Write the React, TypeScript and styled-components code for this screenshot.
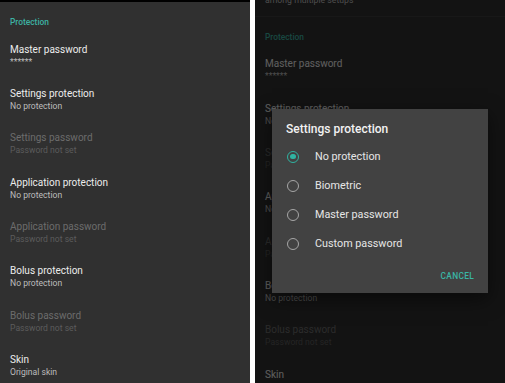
import React from "react";
import styled, { createGlobalStyle } from "styled-components";

const GlobalStyle = createGlobalStyle`
  html, body { margin: 0; padding: 0; background: #ffffff; }
  body { font-family: Roboto, "Noto Sans", "Liberation Sans", sans-serif; }
  * { box-sizing: border-box; }
`;

const Page = styled.div`
  display: flex;
  gap: 5px;
  width: 505px;
  height: 383px;
  background: #ffffff;
`;

const Screen = styled.div<{ $top?: number }>`
  position: relative;
  width: 250px;
  height: 383px;
  overflow: hidden;
  background: #303030;
  border-top: ${(p) => p.$top ?? 0}px solid #000;
  display: flex;
  flex-direction: column;
`;

const PrevTail = styled.div`
  flex: none;
  height: 16.8px;
  border-bottom: 1px solid #3c3c3c;
  padding: 0 10px;
  overflow: visible;
`;

const PrevText = styled.div`
  margin-top: -6px;
  font-size: 8.7px;
  line-height: 12px;
  color: #bdbdbd;
`;

const Category = styled.div`
  flex: none;
  height: 31px;
  display: flex;
  align-items: flex-end;
  padding: 0 10px 6px;
  font-size: 8.4px;
  line-height: 10px;
  font-weight: 500;
  color: #3db3a3;
`;

const Row = styled.div`
  flex: none;
  height: 44.33px;
  display: flex;
  flex-direction: column;
  justify-content: center;
  padding: 0 10px;
`;

const Title = styled.div<{ $disabled?: boolean }>`
  font-size: 10px;
  line-height: 13px;
  color: ${(p) => (p.$disabled ? "#6c6c6c" : "#ececec")};
  white-space: nowrap;
`;

const Summary = styled.div<{ $disabled?: boolean }>`
  font-size: 8.6px;
  line-height: 12px;
  color: ${(p) => (p.$disabled ? "#5c5c5c" : "#bdbdbd")};
  white-space: nowrap;
`;

const Scrim = styled.div`
  position: absolute;
  inset: 0;
  background: rgba(0, 0, 0, 0.6);
  display: flex;
  justify-content: center;
  align-items: flex-start;
  padding-top: 109px;
`;

const Dialog = styled.div`
  width: 216px;
  height: 184px;
  background: #424242;
  box-shadow: 0 6px 18px rgba(0, 0, 0, 0.5);
  display: flex;
  flex-direction: column;
`;

const DialogTitle = styled.div`
  padding: 12.3px 14px 0;
  font-size: 12px;
  line-height: 16px;
  font-weight: 500;
  color: #f2f2f2;
`;

const Options = styled.div`
  margin-top: 4.9px;
  display: flex;
  flex-direction: column;
`;

const Option = styled.div`
  height: 29px;
  display: flex;
  align-items: center;
  padding-left: 15px;
  gap: 16px;
`;

const Radio = styled.div<{ $checked?: boolean }>`
  position: relative;
  width: 12px;
  height: 12px;
  border-radius: 50%;
  border: 1.7px solid ${(p) => (p.$checked ? "#2fb3a1" : "#a6a6a6")};
  display: flex;
  align-items: center;
  justify-content: center;
  &::after {
    content: "";
    display: ${(p) => (p.$checked ? "block" : "none")};
    width: 5.4px;
    height: 5.4px;
    border-radius: 50%;
    background: #2fb3a1;
  }
`;

const OptionLabel = styled.div`
  font-size: 10.8px;
  line-height: 14px;
  color: #e6e6e6;
`;

const Actions = styled.div`
  margin-top: auto;
  display: flex;
  justify-content: flex-end;
  padding: 0 8px 5px;
`;

const TextButton = styled.div`
  height: 24px;
  display: flex;
  align-items: center;
  padding: 0 6px;
  font-size: 8.4px;
  font-weight: 500;
  letter-spacing: 0.3px;
  color: #3ab5a4;
`;

type Pref = { title: string; summary: string; disabled?: boolean };

const prefs: Pref[] = [
  { title: "Master password", summary: "******" },
  { title: "Settings protection", summary: "No protection" },
  { title: "Settings password", summary: "Password not set", disabled: true },
  { title: "Application protection", summary: "No protection" },
  { title: "Application password", summary: "Password not set", disabled: true },
  { title: "Bolus protection", summary: "No protection" },
  { title: "Bolus password", summary: "Password not set", disabled: true },
  { title: "Skin", summary: "Original skin" },
];

const PrefList = () => (
  <>
    <Category>Protection</Category>
    {prefs.map((p) => (
      <Row key={p.title}>
        <Title $disabled={p.disabled}>{p.title}</Title>
        <Summary $disabled={p.disabled}>{p.summary}</Summary>
      </Row>
    ))}
  </>
);

const options = ["No protection", "Biometric", "Master password", "Custom password"];

export default function App() {
  return (
    <>
      <GlobalStyle />
      <Page>
        <Screen $top={2}>
          <PrefList />
        </Screen>
        <Screen>
          <PrevTail>
            <PrevText>among multiple setups</PrevText>
          </PrevTail>
          <PrefList />
          <Scrim>
            <Dialog>
              <DialogTitle>Settings protection</DialogTitle>
              <Options>
                {options.map((o, i) => (
                  <Option key={o}>
                    <Radio $checked={i === 0} />
                    <OptionLabel>{o}</OptionLabel>
                  </Option>
                ))}
              </Options>
              <Actions>
                <TextButton>CANCEL</TextButton>
              </Actions>
            </Dialog>
          </Scrim>
        </Screen>
      </Page>
    </>
  );
}
